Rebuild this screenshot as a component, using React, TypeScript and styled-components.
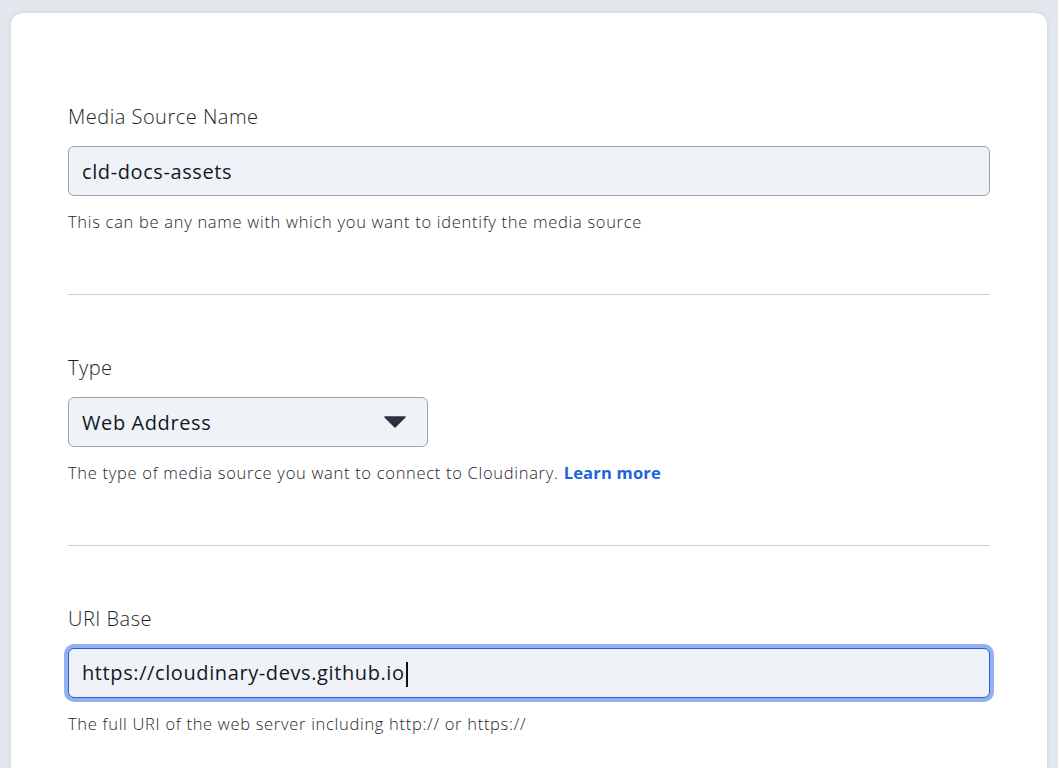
import styled, { createGlobalStyle } from "styled-components";

const GlobalStyle = createGlobalStyle`
  html, body {
    margin: 0;
    padding: 0;
    background: #e3e8ef;
    font-family: "Open Sans", "Noto Sans", sans-serif;
    color: #1d222c;
  }
`;

const Page = styled.div`
  height: 768px;
  overflow: hidden;
  padding: 13px 11px 0 11px;
  box-sizing: border-box;
`;

const Card = styled.div`
  background: #ffffff;
  border-radius: 12px;
  box-shadow: 0 0 4px rgba(120, 135, 160, 0.25);
  padding: 31px 57px 40px 57px;
  min-height: 900px;
  box-sizing: border-box;
`;

const Section = styled.div<{ $last?: boolean }>`
  padding: 61px 0 62px 0;
  border-bottom: ${(p) => (p.$last ? "none" : "1px solid #c6cdd8")};
`;

const Label = styled.div`
  font-size: 20px;
  font-weight: 300;
  line-height: 24px;
  letter-spacing: 0.5px;
  color: #1a1f29;
  margin-bottom: 17px;
`;

const Field = styled.div<{ $width?: string; $focused?: boolean }>`
  width: ${(p) => p.$width || "100%"};
  height: 50px;
  box-sizing: border-box;
  display: flex;
  align-items: center;
  padding: 0 13px;
  background: #eff3f8;
  border: 1px solid ${(p) => (p.$focused ? "#2c5bd4" : "#98a2b3")};
  border-radius: 6px;
  box-shadow: ${(p) => (p.$focused ? "0 0 0 4px #93b0f0" : "none")};
  font-size: 20px;
  font-weight: 400;
  letter-spacing: 0.6px;
  color: #14181f;
`;

const Value = styled.span`
  flex: 1;
  white-space: nowrap;
`;

const Caret = styled.span`
  display: inline-block;
  width: 2px;
  height: 25px;
  background: #111;
  vertical-align: middle;
  margin-left: 1px;
`;

const Arrow = styled.svg`
  width: 22px;
  height: 12px;
  margin-right: 8px;
`;

const Help = styled.div`
  margin-top: 16px;
  font-size: 16.5px;
  font-weight: 300;
  line-height: 20px;
  letter-spacing: 0.7px;
  color: #1f242d;
`;

const LearnMore = styled.a`
  color: #1f63d9;
  font-weight: 700;
  letter-spacing: 0.2px;
  text-decoration: none;
`;

export default function App() {
  return (
    <Page>
      <GlobalStyle />
      <Card>
        <Section>
          <Label>Media Source Name</Label>
          <Field>
            <Value>cld-docs-assets</Value>
          </Field>
          <Help>This can be any name with which you want to identify the media source</Help>
        </Section>
        <Section>
          <Label>Type</Label>
          <Field $width="360px">
            <Value>Web Address</Value>
            <Arrow viewBox="0 0 22 12">
              <path d="M1 1 L21 1 L11 11 Z" fill="#2b313d" stroke="#2b313d" strokeLinejoin="round" strokeWidth="1.5" />
            </Arrow>
          </Field>
          <Help>
            The type of media source you want to connect to Cloudinary. <LearnMore href="#">Learn more</LearnMore>
          </Help>
        </Section>
        <Section $last>
          <Label>URI Base</Label>
          <Field $focused>
            <Value>
              https://cloudinary-devs.github.io
              <Caret />
            </Value>
          </Field>
          <Help>The full URI of the web server including http:// or https://</Help>
        </Section>
      </Card>
    </Page>
  );
}
